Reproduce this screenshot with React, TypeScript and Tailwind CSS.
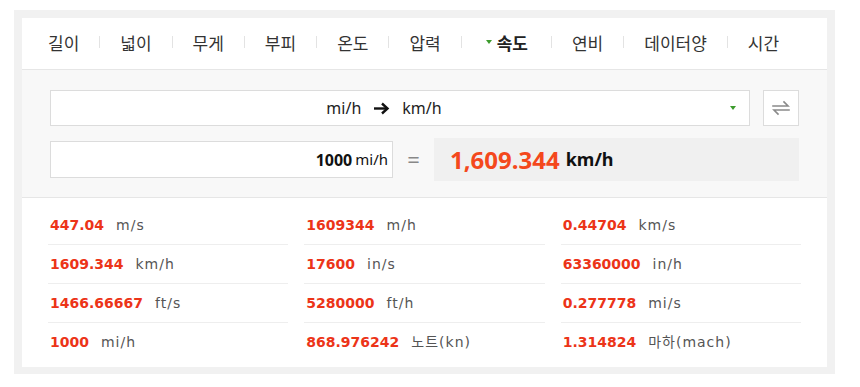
import { useState } from "react";

const tabs = ["길이", "넓이", "무게", "부피", "온도", "압력", "속도", "연비", "데이터양", "시간"];

const results: { value: string; unit: string }[][] = [
    [{ value: "447.04", unit: "m/s" }, { value: "1609344", unit: "m/h" }, { value: "0.44704", unit: "km/s" }],
    [{ value: "1609.344", unit: "km/h" }, { value: "17600", unit: "in/s" }, { value: "63360000", unit: "in/h" }],
    [{ value: "1466.66667", unit: "ft/s" }, { value: "5280000", unit: "ft/h" }, { value: "0.277778", unit: "mi/s" }],
    [{ value: "1000", unit: "mi/h" }, { value: "868.976242", unit: "노트(kn)" }, { value: "1.314824", unit: "마하(mach)" }],
];

function SwapIcon() {
    return (
        <svg width="20" height="16" viewBox="0 0 20 16" fill="none" stroke="#8a8a8a" strokeWidth="1.6" strokeLinecap="square">
            <path d="M2 6 H17 L13 2" />
            <path d="M18 10 H3 L7 14" />
        </svg>
    );
}

export default function App() {
    const [active, setActive] = useState<string>("속도");

    return (
        <div className="min-h-[387px] bg-white font-['Noto_Sans','Noto_Sans_CJK_KR',sans-serif]">
            <div className="ml-[14px] mt-[10px] w-[821px] bg-[#f1f1f1] px-[8px] pt-[8px] pb-[7px]">
                <div className="bg-white">

                    {/* tabs */}
                    <div className="flex h-[52px] items-center border-b border-[#e6e6e6] pb-[3px] pl-[26px] font-['Noto_Sans_CJK_KR',sans-serif] text-[17px] text-[#333]">
                        {tabs.map((t, i) => (
                            <div key={t} className="flex items-center">
                                {i > 0 && <span className="mx-[20px] h-[12px] w-px bg-[#e3e3e3]" />}
                                <button onClick={() => setActive(t)} className={`flex items-center leading-none ${active === t ? "gap-[5px] pl-[4px] pr-[3px] font-bold text-[#222]" : ""}`}>
                                    {active === t && <span className="h-0 w-0 border-x-[3px] border-t-[4px] border-x-transparent border-t-[#3c9b2c]" />}
                                    {t}
                                </button>
                            </div>
                        ))}
                    </div>

                    {/* converter */}
                    <div className="border-b border-[#e6e6e6] bg-[#f8f8f8] px-[28px] pt-[20px] pb-[16px]">
                        <div className="flex gap-[13px]">
                            <div className="relative flex h-[36px] flex-1 items-center justify-center border border-[#dcdcdc] bg-white pr-[32px] text-[16px] text-[#222]">
                                <span>mi/h</span>
                                <svg className="mx-[12px]" width="17" height="13" viewBox="0 0 17 13" fill="none" stroke="#111" strokeWidth="2.4">
                                    <path d="M1 6.5 H14" />
                                    <path d="M9 1.5 L14.5 6.5 L9 11.5" />
                                </svg>
                                <span>km/h</span>
                                <span className="absolute right-[13px] top-[15px] h-0 w-0 border-x-[3px] border-t-[4px] border-x-transparent border-t-[#3c9b2c]" />
                            </div>
                            <button className="flex h-[36px] w-[36px] items-center justify-center border border-[#dcdcdc] bg-white">
                                <SwapIcon />
                            </button>
                        </div>

                        <div className="mt-[12px] flex items-center">
                            <div className="flex h-[37px] w-[343px] items-center justify-end gap-[3px] border border-[#dcdcdc] bg-white pr-[4px] text-[#111]">
                                <span className="text-[16px] font-bold">1000</span>
                                <span className="text-[15px]">mi/h</span>
                            </div>
                            <div className="flex w-[41px] justify-center text-[22px] text-[#888]">=</div>
                            <div className="flex h-[43px] flex-1 items-center gap-[6px] bg-[#f0f0f0] pl-[16px]">
                                <span className="text-[24px] font-bold text-[#f4481c]">1,609.344</span>
                                <span className="text-[18px] font-bold text-[#111]">km/h</span>
                            </div>
                        </div>
                    </div>

                    {/* results */}
                    <div className="grid grid-cols-3 gap-x-[16px] px-[26px] pt-[8px] pb-[5px]">
                        {[0, 1, 2].map((c) => (
                            <div key={c} className="flex flex-col">
                                {results.map((row, r) => (
                                    <div key={r} className={`flex h-[39px] items-center pl-[2px] ${r < 3 ? "border-b border-[#eeeeee]" : ""}`}>
                                        <span className="font-['DejaVu_Sans',sans-serif] text-[14px] font-bold text-[#ec3418]">{row[c].value}</span>
                                        <span className="ml-[12px] font-['DejaVu_Sans','Noto_Sans_CJK_KR',sans-serif] text-[14px] tracking-[1px] text-[#555]">{row[c].unit}</span>
                                    </div>
                                ))}
                            </div>
                        ))}
                    </div>

                </div>
            </div>
        </div>
    );
}
